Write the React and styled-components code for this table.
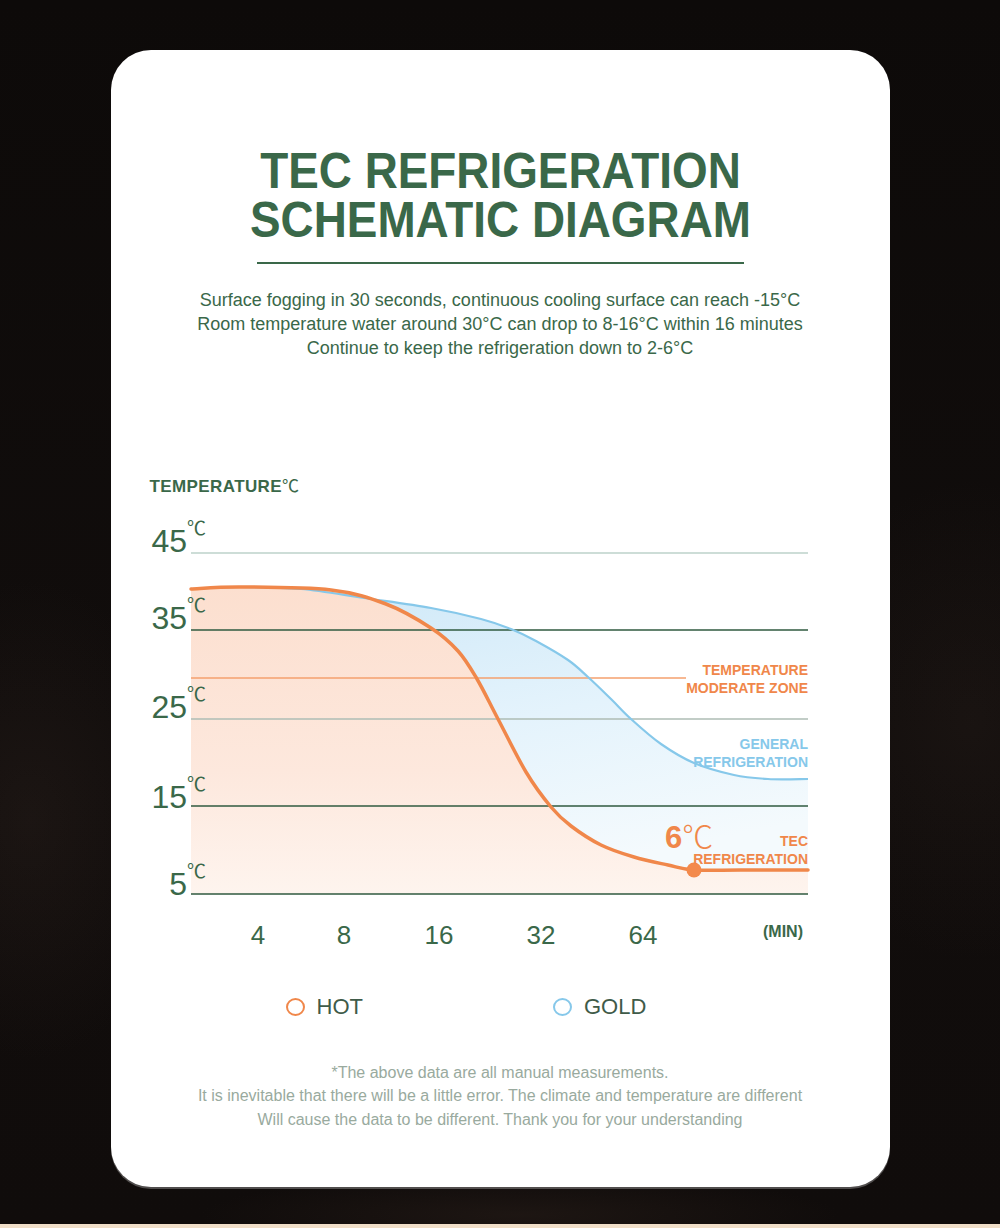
import styled, { createGlobalStyle } from "styled-components";

/* TEC 냉각 그래프 카드 */

const green = "#3a6849";
const orange = "#f0874a";
const blue = "#86c8ea";
const sans = '"Liberation Sans", Arial, sans-serif';
const cjk = '"Noto Sans CJK SC", "DejaVu Sans", sans-serif';

const GlobalStyle = createGlobalStyle`
  body {
    margin: 0;
    background: #0e0b0a;
    font-family: ${sans};
  }
`;

const Page = styled.div`
  box-sizing: border-box;
  min-height: 1228px;
  padding-top: 50px;
  border-bottom: 4px solid #f0dec8;
  background:
    radial-gradient(ellipse 160px 240px at 30px 820px, rgba(60, 46, 40, 0.25), transparent),
    radial-gradient(ellipse 180px 240px at 970px 720px, rgba(55, 42, 36, 0.22), transparent),
    radial-gradient(ellipse 320px 40px at 520px 1215px, rgba(60, 44, 36, 0.3), transparent),
    linear-gradient(180deg, #0d0a09 0%, #110d0c 60%, #100c0b 100%);
`;

const Card = styled.div`
  width: 779px;
  margin: 0 auto;
  background: #fff;
  border-radius: 40px;
  padding: 97px 0 56px;
  box-shadow: 0 2px 0 rgba(200, 200, 200, 0.35);
`;

const Title = styled.h1`
  margin: 0;
  text-align: center;
  font-size: 50px;
  line-height: 49px;
  font-weight: bold;
  color: ${green};
  transform: scaleX(0.917);
`;

const Divider = styled.div`
  width: 487px;
  height: 1.5px;
  margin: 17px auto 0;
  background: ${green};
`;

const Subtitle = styled.p`
  margin: 24px 0 0;
  text-align: center;
  font-size: 18px;
  line-height: 24px;
  color: ${green};
`;

const ChartBlock = styled.div`
  margin: 115px 0 0 30px;
`;

const AxisTitle = styled.div`
  padding-left: 9px;
  font-size: 17px;
  line-height: 20px;
  font-weight: bold;
  letter-spacing: 0.4px;
  color: ${green};
  span {
    font-family: ${cjk};
    font-weight: normal;
    letter-spacing: 0;
  }
`;

const ChartSvg = styled.svg`
  display: block;
  margin-top: 5px;
`;

const Legend = styled.div`
  display: flex;
  gap: 190px;
  margin-top: 38px;
  padding-left: 175px;
  height: 24px;
`;

const LegendItem = styled.div`
  display: flex;
  align-items: center;
  gap: 12px;
  font-size: 22px;
  line-height: 24px;
  color: #3f5b49;
  &::before {
    content: "";
    box-sizing: border-box;
    width: 19px;
    height: 18px;
    border-radius: 50%;
    border: 2.5px solid ${(p) => p.$color};
  }
`;

const Note = styled.p`
  margin: 42px 0 0;
  text-align: center;
  font-size: 16px;
  line-height: 23.5px;
  color: #99aa9e;
`;

const smooth = (pts) => {
  let d = `M${pts[0][0]},${pts[0][1]}`;
  for (let i = 0; i < pts.length - 1; i++) {
    const p0 = pts[i - 1] || pts[i];
    const p1 = pts[i];
    const p2 = pts[i + 1];
    const p3 = pts[i + 2] || p2;
    const c1 = [p1[0] + (p2[0] - p0[0]) / 6, p1[1] + (p2[1] - p0[1]) / 6];
    const c2 = [p2[0] - (p3[0] - p1[0]) / 6, p2[1] - (p3[1] - p1[1]) / 6];
    d += ` C${c1[0].toFixed(1)},${c1[1].toFixed(1)} ${c2[0].toFixed(1)},${c2[1].toFixed(1)} ${p2[0]},${p2[1]}`;
  }
  return d;
};

const hotPts = [
  [190, 587], [240, 585], [330, 588], [385, 602], [430, 626], [457, 649],
  [476, 677], [497, 717], [525, 770], [550, 805], [570, 824], [600, 843],
  [633, 855], [667, 863], [693, 868], [740, 868], [807, 868],
];

const coldPts = [
  [190, 587], [240, 585], [300, 587], [363, 596], [430, 606], [480, 617],
  [510, 627], [535, 639], [567, 658], [587, 675], [610, 697], [630, 717],
  [660, 742], [693, 761], [733, 773], [767, 777], [807, 777],
];

const hotLine = smooth(hotPts);
const coldLine = smooth(coldPts);
const toArea = (line) => `${line} L807,892 L190,892 Z`;

const grid = [
  { y: 551, color: "#bcd2ca", w: 1.3 },
  { y: 628, color: "#2f5a3f", w: 1.5 },
  { y: 717, color: "#aebdb5", w: 1.3 },
  { y: 804, color: "#2f5a3f", w: 1.5 },
  { y: 892, color: "#2f5a3f", w: 1.5 },
];

const yLabels = [
  { v: "45", y: 550 },
  { v: "35", y: 627 },
  { v: "25", y: 716 },
  { v: "15", y: 806 },
  { v: "5", y: 893 },
];

const xLabels = [
  { v: "4", x: 257 },
  { v: "8", x: 343 },
  { v: "16", x: 438 },
  { v: "32", x: 540 },
  { v: "64", x: 642 },
];

const zoneLabels = [
  { t: "TEMPERATURE", y: 673, c: orange },
  { t: "MODERATE ZONE", y: 691, c: orange },
  { t: "GENERAL", y: 747, c: blue },
  { t: "REFRIGERATION", y: 765, c: blue },
  { t: "TEC", y: 844, c: orange },
  { t: "REFRIGERATION", y: 862, c: orange },
];

const Chart = () => (
  <ChartSvg width="680" height="455" viewBox="140 500 680 455">
    <defs>
      <linearGradient id="coldFill" x1="0" y1="0" x2="0.4" y2="1">
        <stop offset="0" stopColor="#cce7f7" />
        <stop offset="0.55" stopColor="#e4f3fc" />
        <stop offset="1" stopColor="#f4fafd" />
      </linearGradient>
      <linearGradient id="hotFill" x1="0" y1="0" x2="0" y2="1">
        <stop offset="0" stopColor="#fcdfcf" />
        <stop offset="0.6" stopColor="#fde8dd" />
        <stop offset="1" stopColor="#fef4ee" />
      </linearGradient>
    </defs>

    <path d={toArea(coldLine)} fill="url(#coldFill)" />
    <path d={toArea(hotLine)} fill="url(#hotFill)" />

    {grid.map((g) => (
      <line key={g.y} x1="190" x2="807" y1={g.y} y2={g.y} stroke={g.color} strokeWidth={g.w} />
    ))}
    <line x1="190" x2="685" y1="676" y2="676" stroke="#f4a06e" strokeWidth="1.3" />

    <path d={coldLine} fill="none" stroke={blue} strokeWidth="2.2" />
    <path d={hotLine} fill="none" stroke={orange} strokeWidth="3.5" strokeLinecap="round" />
    <circle cx="693" cy="868" r="7.5" fill="#f38a4c" />

    {yLabels.map((l) => (
      <g key={l.v} fill={green}>
        <text x="186" y={l.y} textAnchor="end" fontFamily={sans} fontSize="32">{l.v}</text>
        <text x="186" y={l.y - 17} fontFamily={cjk} fontSize="19">℃</text>
      </g>
    ))}

    {zoneLabels.map((l, i) => (
      <text key={i} x="807" y={l.y} textAnchor="end" fontFamily={sans} fontSize="14" fontWeight="bold" fill={l.c}>
        {l.t}
      </text>
    ))}

    <text x="664" y="846" fill={orange}>
      <tspan fontFamily={sans} fontSize="31" fontWeight="bold">6</tspan>
      <tspan fontFamily={cjk} fontSize="31" fontWeight="300">℃</tspan>
    </text>

    {xLabels.map((l) => (
      <text key={l.v} x={l.x} y="942" textAnchor="middle" fontFamily={sans} fontSize="26" fill={green}>
        {l.v}
      </text>
    ))}
    <text x="802" y="935" textAnchor="end" fontFamily={sans} fontSize="16" fontWeight="bold" fill={green}>
      (MIN)
    </text>
  </ChartSvg>
);

const App = () => (
  <>
    <GlobalStyle />
    <Page>
      <Card>
        <Title>
          TEC REFRIGERATION
          <br />
          SCHEMATIC DIAGRAM
        </Title>
        <Divider />
        <Subtitle>
          Surface fogging in 30 seconds, continuous cooling surface can reach -15°C
          <br />
          Room temperature water around 30°C can drop to 8-16°C within 16 minutes
          <br />
          Continue to keep the refrigeration down to 2-6°C
        </Subtitle>

        <ChartBlock>
          <AxisTitle>
            TEMPERATURE<span>℃</span>
          </AxisTitle>
          <Chart />
        </ChartBlock>

        <Legend>
          <LegendItem $color={orange}>HOT</LegendItem>
          <LegendItem $color={blue}>GOLD</LegendItem>
        </Legend>

        <Note>
          *The above data are all manual measurements.
          <br />
          It is inevitable that there will be a little error. The climate and temperature are different
          <br />
          Will cause the data to be different. Thank you for your understanding
        </Note>
      </Card>
    </Page>
  </>
);

export default App;
